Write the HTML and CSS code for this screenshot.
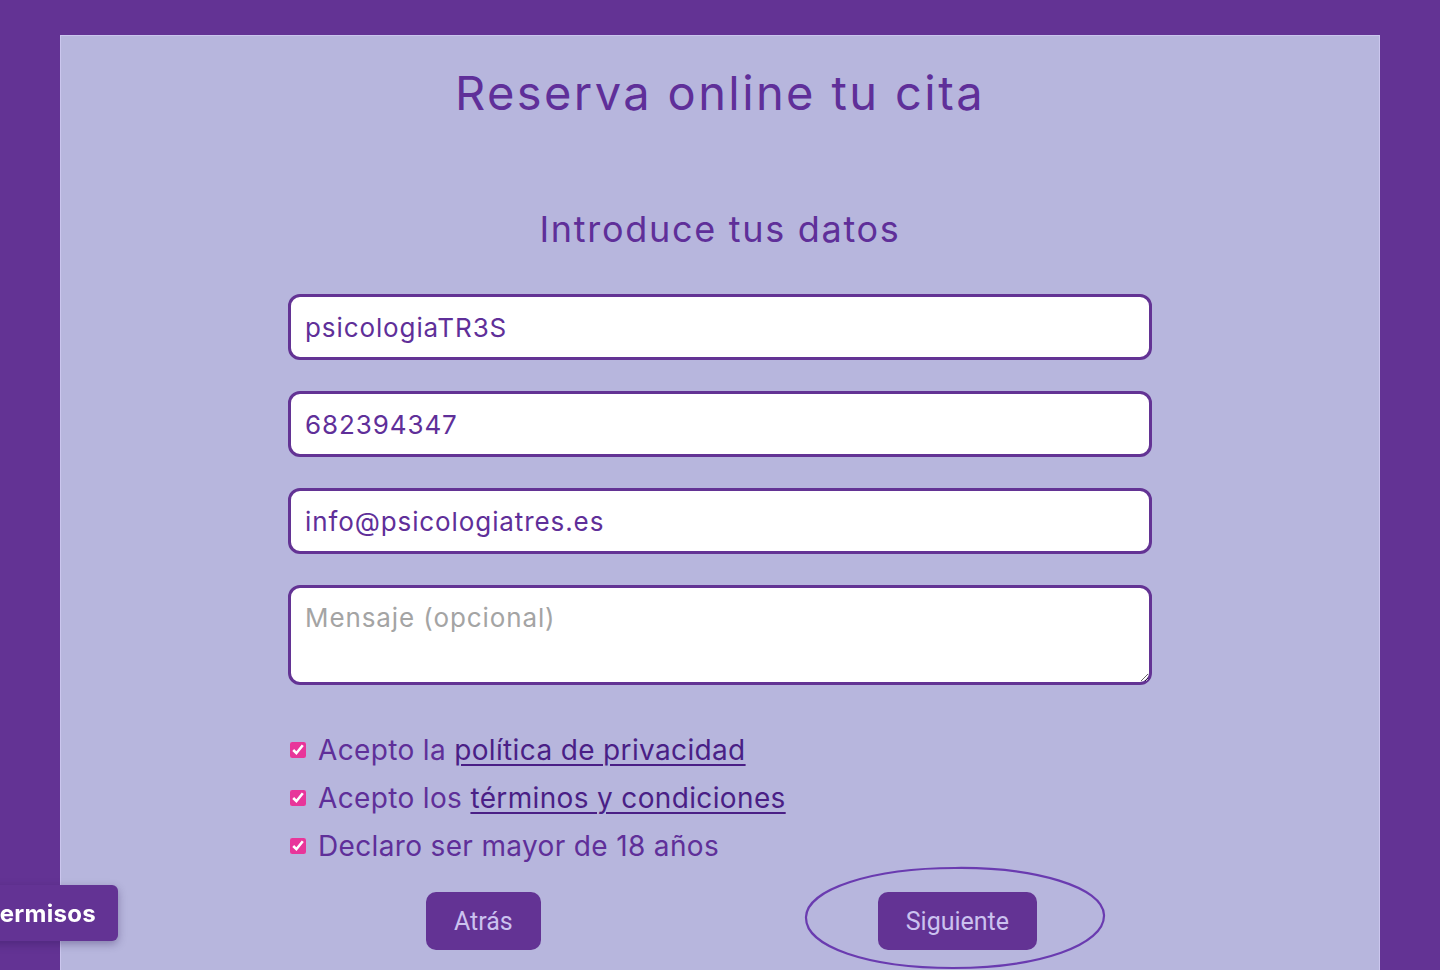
FILE: index.html
```html
<!DOCTYPE html>
<html lang="es">
<head>
<meta charset="utf-8">
<title>Reserva online tu cita</title>
<link rel="stylesheet" href="styles.css">
</head>
<body>
<main class="panel">
  <h1 class="title">Reserva online tu cita</h1>
  <h2 class="subtitle">Introduce tus datos</h2>
  <form class="form">
    <input class="field" type="text" value="psicologiaTR3S">
    <input class="field" type="tel" value="682394347">
    <input class="field" type="email" value="info@psicologiatres.es">
    <textarea class="field area" placeholder="Mensaje (opcional)"></textarea>
    <div class="checks">
      <label class="check"><input type="checkbox" checked><span>Acepto la <a href="#">política de privacidad</a></span></label>
      <label class="check"><input type="checkbox" checked><span>Acepto los <a href="#">términos y condiciones</a></span></label>
      <label class="check"><input type="checkbox" checked><span>Declaro ser mayor de 18 años</span></label>
    </div>
    <div class="actions">
      <button type="button" class="btn">Atrás</button>
      <div class="next-wrap">
        <button type="button" class="btn">Siguiente</button>
        <svg class="circle" width="304" height="106" viewBox="0 0 304 106">
          <path d="M152 3 C 232 2, 300 22, 301 50 C 302 80, 236 103, 150 103 C 66 103, 2 82, 3 52 C 4 24, 70 3, 152 3 Z" fill="none" stroke="#6a3bb0" stroke-width="2.2"/>
        </svg>
      </div>
    </div>
  </form>
</main>
<button type="button" class="perm">Permisos</button>
</body>
</html>
```

FILE: styles.css
```css
html, body {
  margin: 0;
  padding: 0;
  height: 100%;
  overflow: hidden;
}
body {
  background: #633394;
  padding-top: 35px;
  box-sizing: border-box;
  font-family: "Inter", "Open Sans", sans-serif;
  color: #5f2f99;
}
.panel {
  margin: 0 60px;
  background: #b7b6dd;
  border-left: 1px solid #cbc6ee;
  border-top: 1px solid #cbc6ee;
  border-right: 1px solid #cbc6ee;
  min-height: 1000px;
  padding-top: 22px;
  box-sizing: border-box;
}
.title {
  margin: 0;
  text-align: center;
  font-weight: 400;
  font-size: 47px;
  line-height: 70px;
  letter-spacing: 2.4px;
  color: #5f2f99;
}
.subtitle {
  margin: 76px 0 0;
  text-align: center;
  font-weight: 400;
  font-size: 36px;
  line-height: 50px;
  letter-spacing: 1.7px;
  color: #5f2f99;
}
.form {
  width: 864px;
  margin: 40px auto 0;
  display: flex;
  flex-direction: column;
  gap: 31px;
}
.field {
  box-sizing: border-box;
  width: 100%;
  height: 66px;
  border: 3px solid #633394;
  border-radius: 12px;
  background: #fff;
  padding: 0 14px;
  font-family: "Inter", "Open Sans", sans-serif;
  font-size: 26px;
  letter-spacing: 0.9px;
  color: #5f2f99;
  outline: none;
}
.area {
  height: 100px;
  padding-top: 14px;
  resize: vertical;
  display: block;
}
.area::placeholder {
  color: #a4a4a4;
}
.checks {
  display: flex;
  flex-direction: column;
  margin-top: 10px;
}
.check {
  display: flex;
  align-items: center;
  height: 48px;
  font-size: 28px;
  letter-spacing: 0.35px;
  color: #5f2f99;
}
.check input {
  width: 16px;
  height: 16px;
  margin: 0 12px 0 2px;
  accent-color: #e8369a;
}
.check a {
  color: #4a1f86;
  text-decoration: underline;
  text-underline-offset: 4px;
  text-decoration-thickness: 2px;
}
.actions {
  display: flex;
  justify-content: center;
  gap: 337px;
  padding-left: 23px;
  margin-top: -9px;
}
.btn {
  height: 58px;
  padding: 0 28px;
  border: none;
  border-radius: 10px;
  background: #633394;
  color: #cbc2ef;
  font-family: "Roboto", "Liberation Sans", sans-serif;
  font-size: 25px;
}
.next-wrap {
  position: relative;
}
.circle {
  position: absolute;
  left: -75px;
  top: -27px;
  pointer-events: none;
}
.perm {
  position: fixed;
  left: -46px;
  top: 885px;
  height: 56px;
  padding: 0 22px 0 30px;
  border: none;
  border-radius: 0 6px 6px 0;
  background: #633394;
  color: #fff;
  font-family: "Inter", "Open Sans", sans-serif;
  font-weight: 700;
  font-size: 24px;
  letter-spacing: 0.3px;
  box-shadow: 0 3px 8px rgba(40, 20, 80, 0.35);
}
```
